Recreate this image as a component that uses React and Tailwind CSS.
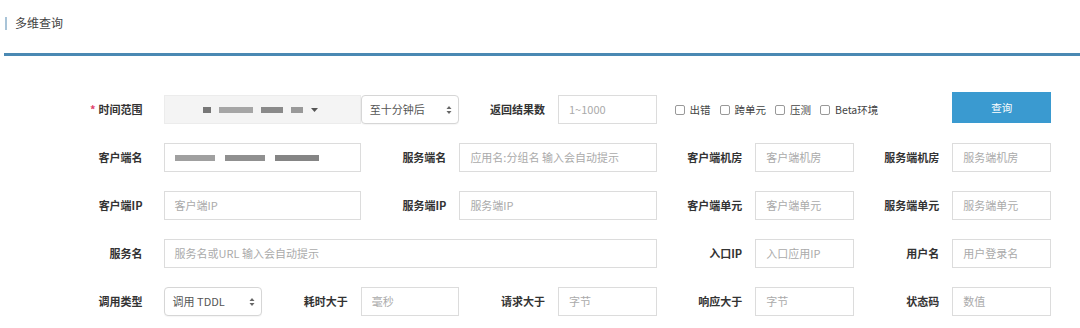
import React from "react";

const font = { fontFamily: '"Noto Sans CJK SC", "Noto Sans", sans-serif' };

function Label({ children, first, required }) {
  return (
    <div
      className={`flex items-center justify-end text-[11px] font-bold text-[#333] ${
        first ? "pr-[21px]" : "pr-[13px]"
      }`}
    >
      {required && <span className="mr-[3px] text-[#e0436b]">*</span>}
      {children}
    </div>
  );
}

function Input({ placeholder, span }) {
  return (
    <div
      className={`flex items-center border border-[#dcdcdc] bg-white px-[10px] text-[11px] text-[#aaa] ${
        span === 2 ? "col-span-2" : ""
      }`}
    >
      {placeholder}
    </div>
  );
}

function Select({ value }) {
  return (
    <div className="flex items-center justify-between rounded-[4px] border border-[#d6d6d6] bg-white pl-[8px] pr-[6px] text-[11px] text-[#555] shadow-[0_1px_1px_rgba(0,0,0,0.04)]">
      <span>{value}</span>
      <svg width="6" height="10" viewBox="0 0 6 10">
        <path d="M0.5 4 L3 1 L5.5 4 Z" fill="#666" />
        <path d="M0.5 6 L3 9 L5.5 6 Z" fill="#666" />
      </svg>
    </div>
  );
}

function Blur({ w, c = "#9a9a9a" }) {
  return <span className="inline-block h-[6px] blur-[0.6px]" style={{ width: w, background: c }} />;
}

function Check({ label }) {
  return (
    <label className="flex items-center gap-[5px] text-[10.5px] text-[#444]">
      <span className="inline-block h-[10px] w-[10px] rounded-[2px] border border-[#999] bg-white" />
      {label}
    </label>
  );
}

export default function App() {
  return (
    <div className="h-[328px] w-[1080px] overflow-hidden bg-white" style={font}>
      <div className="flex items-center pl-[5px] pt-[14px]">
        <span className="h-[13px] w-[2px] bg-[#a9c4d8]" />
        <span className="ml-[8px] text-[12px] text-[#444]">多维查询</span>
      </div>
      <div className="ml-[4px] mt-[21px] h-[3px] bg-[#4a89b3]" />

      <div className="mt-[39px] grid grid-cols-[repeat(10,98.6px)] auto-rows-[29px] gap-y-[19px] pl-[65px]">
        {/* row 1 */}
        <Label first required>时间范围</Label>
        <div className="col-span-2 flex items-center gap-[8px] border border-[#ececec] bg-[#f4f4f4] pl-[38px]">
          <Blur w={8} c="#777" />
          <Blur w={34} c="#a6a6a6" />
          <Blur w={22} c="#8a8a8a" />
          <Blur w={12} c="#999" />
          <svg width="7" height="4" viewBox="0 0 7 4">
            <path d="M0 0 L7 0 L3.5 4 Z" fill="#555" />
          </svg>
        </div>
        <Select value="至十分钟后" />
        <Label>返回结果数</Label>
        <Input placeholder="1~1000" />
        <div className="col-span-3 flex items-center gap-[9px] pl-[18px]">
          <Check label="出错" />
          <Check label="跨单元" />
          <Check label="压测" />
          <Check label="Beta环境" />
        </div>
        <div className="-mt-[3px] mb-[1px] flex items-center justify-center bg-[#3a9ad0] text-[10.5px] text-white">
          查询
        </div>

        {/* row 2 */}
        <Label first>客户端名</Label>
        <div className="col-span-2 flex items-center gap-[10px] border border-[#dcdcdc] bg-white px-[10px]">
          <Blur w={40} c="#a0a0a0" />
          <Blur w={40} c="#909090" />
          <Blur w={44} c="#858585" />
        </div>
        <Label>服务端名</Label>
        <Input span={2} placeholder="应用名:分组名 输入会自动提示" />
        <Label>客户端机房</Label>
        <Input placeholder="客户端机房" />
        <Label>服务端机房</Label>
        <Input placeholder="服务端机房" />

        {/* row 3 */}
        <Label first>客户端IP</Label>
        <Input span={2} placeholder="客户端IP" />
        <Label>服务端IP</Label>
        <Input span={2} placeholder="服务端IP" />
        <Label>客户端单元</Label>
        <Input placeholder="客户端单元" />
        <Label>服务端单元</Label>
        <Input placeholder="服务端单元" />

        {/* row 4 */}
        <Label first>服务名</Label>
        <div className="col-span-5 flex items-center border border-[#dcdcdc] bg-white px-[10px] text-[11px] text-[#aaa]">
          服务名或URL 输入会自动提示
        </div>
        <Label>入口IP</Label>
        <Input placeholder="入口应用IP" />
        <Label>用户名</Label>
        <Input placeholder="用户登录名" />

        {/* row 5 */}
        <Label first>调用类型</Label>
        <Select value="调用 TDDL" />
        <Label>耗时大于</Label>
        <Input placeholder="毫秒" />
        <Label>请求大于</Label>
        <Input placeholder="字节" />
        <Label>响应大于</Label>
        <Input placeholder="字节" />
        <Label>状态码</Label>
        <Input placeholder="数值" />
      </div>
    </div>
  );
}
